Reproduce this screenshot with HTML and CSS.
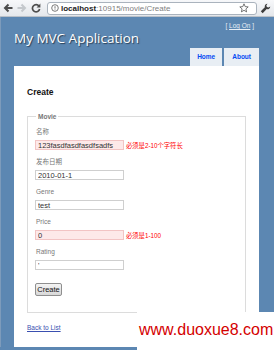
FILE: index.html
```html
<!DOCTYPE html>
<html lang="zh-CN">
  <head>
    <meta charset="UTF-8" />
    <title>Create</title>
    <link rel="stylesheet" href="styles.css">
  </head>
  <body>
    <!-- ブラウザのツールバー -->
    <div class="toolbar">
      <svg class="nav-icon" width="10" height="10" viewBox="0 0 10 10">
        <path d="M9.5 5H2.5M5.5 1.5L2 5l3.5 3.5" stroke="#4d4d4d" stroke-width="2" fill="none" />
      </svg>
      <svg class="nav-icon" width="10" height="10" viewBox="0 0 10 10">
        <path d="M0.5 5H7.5M4.5 1.5L8 5 4.5 8.5" stroke="#c4c8cc" stroke-width="2" fill="none" />
      </svg>
      <svg class="nav-icon" width="10" height="10" viewBox="0 0 10 10">
        <path d="M8 3.2A3.6 3.6 0 1 0 8.6 6" stroke="#4d4d4d" stroke-width="1.7" fill="none" />
        <path d="M9.4 0.6V4.4H5.6z" fill="#4d4d4d" />
      </svg>
      <div class="omnibox">
        <svg class="page-icon" width="8" height="8" viewBox="0 0 8 8">
          <circle cx="4" cy="4" r="3.3" stroke="#6b6b6b" stroke-width="0.9" fill="none" />
          <path d="M4 2.2V4.6M4 5.4V6" stroke="#6b6b6b" stroke-width="0.9" />
        </svg>
        <span class="url"><b>localhost</b>:10915/movie/Create</span>
        <svg class="star" width="10" height="10" viewBox="0 0 10 10">
          <path d="M5 0.8l1.2 2.8 3 .3-2.3 2 .7 3L5 7.3 2.4 8.9l.7-3-2.3-2 3-.3z" stroke="#555" stroke-width="0.8" fill="none" />
        </svg>
      </div>
      <svg class="wrench" width="11" height="11" viewBox="0 0 11 11">
        <path d="M7.6 0.6a2.8 2.8 0 0 0-2.7 3.6L0.8 8.3l1.9 1.9 4.1-4.1A2.8 2.8 0 0 0 10.4 3.4L8.6 4.6 7 4 6.4 2.4 7.6 0.6z" fill="#3d3d3d" />
      </svg>
    </div>

    <div class="page">
      <div class="header">
        <div class="title">
          <h1>My MVC Application</h1>
        </div>
        <div class="header-right">
          <div class="logindisplay">[ <a href="#">Log On</a> ]</div>
          <ul class="menu">
            <li><a href="#">Home</a></li>
            <li><a href="#">About</a></li>
          </ul>
        </div>
      </div>

      <div class="main">
        <h2>Create</h2>

        <form>
          <fieldset>
            <legend>Movie</legend>

            <div class="editor-label">名称</div>
            <div class="editor-field">
              <input type="text" class="input-validation-error" value="123fasdfasdfasdfsadfs" />
              <span class="field-validation-error">必须是2-10个字符长</span>
            </div>

            <div class="editor-label">发布日期</div>
            <div class="editor-field">
              <input type="text" value="2010-01-1" />
            </div>

            <div class="editor-label">Genre</div>
            <div class="editor-field">
              <input type="text" value="test" />
            </div>

            <div class="editor-label">Price</div>
            <div class="editor-field">
              <input type="text" class="input-validation-error" value="0" />
              <span class="field-validation-error">必须是1-100</span>
            </div>

            <div class="editor-label">Rating</div>
            <div class="editor-field">
              <input type="text" value="'" />
            </div>

            <p class="submit-row">
              <input type="submit" class="btn" value="Create" />
            </p>
          </fieldset>
        </form>

        <div class="back-link">
          <a href="#">Back to List</a>
        </div>
      </div>
    </div>

    <!-- 透かし -->
    <div class="watermark">www.duoxue8.com</div>
  </body>
</html>
```

FILE: styles.css
```css
body {
  margin: 0;
  width: 274px;
  height: 350px;
  overflow: hidden;
  position: relative;
  font-family: "Liberation Sans", Arial, "Noto Sans CJK SC", sans-serif;
  background-color: #5c87b2;
}

.toolbar {
  display: flex;
  align-items: center;
  height: 17px;
  padding: 0 3px;
  box-sizing: border-box;
  background: linear-gradient(#f7f8fa, #e4e7eb);
  border-bottom: 1px solid #b9c0c8;
}

.nav-icon {
  margin-right: 4px;
  flex-shrink: 0;
}

.omnibox {
  display: flex;
  align-items: center;
  margin-left: 2px;
  width: 213px;
  height: 13px;
  box-sizing: border-box;
  background: white;
  border: 1px solid #aab3bd;
  border-radius: 3px;
  padding: 0 3px;
}

.page-icon {
  margin-right: 2px;
  flex-shrink: 0;
}

.url {
  flex: 1;
  font-size: 8px;
  color: #808080;
  white-space: nowrap;
}

.url b {
  color: #222;
}

.star {
  flex-shrink: 0;
  margin-right: 4px;
}

.wrench {
  margin-left: 3px;
}

.page {
  padding: 0 15px 0 13px;
  border-left: 1px solid #7d9bbb;
}

.header {
  display: flex;
  justify-content: space-between;
  height: 49px;
}

.title h1 {
  margin: 0;
  padding: 12px 0 0 0;
  font-family: "Open Sans", "Liberation Sans", sans-serif;
  font-size: 13.5px;
  line-height: 18px;
  font-weight: normal;
  color: white;
  text-shadow: 1px 1px 1px #2a3f55;
}

.header-right {
  display: flex;
  flex-direction: column;
  justify-content: space-between;
  align-items: flex-end;
}

.logindisplay {
  padding: 5px 5px 0 0;
  font-size: 6.5px;
  line-height: 8px;
  color: #e6eef6;
}

.logindisplay a {
  color: #e6eef6;
}

.menu {
  display: flex;
  gap: 2px;
  margin: 0;
  padding: 0;
  list-style: none;
}

.menu a {
  display: block;
  height: 18px;
  line-height: 18px;
  padding: 0 7px;
  background-color: #e8eef4;
  color: #034af3;
  font-size: 6.5px;
  font-weight: bold;
  text-decoration: none;
}

.menu li:last-child a {
  padding: 0 8px;
}

.main {
  background: white;
  padding: 21px 13px 15px;
}

.main h2 {
  margin: 0;
  font-size: 8.5px;
  line-height: 10px;
  color: #111;
}

fieldset {
  margin: 15px 0 0 0;
  padding: 6px 7px 16px;
  border: 1px solid #dcdcdc;
}

legend {
  padding: 0 2px;
  margin-left: 1px;
  font-size: 6.5px;
  line-height: 9px;
  font-weight: bold;
  color: #777;
}

.editor-label {
  height: 9px;
  line-height: 9px;
  padding-left: 1px;
  font-size: 6.5px;
  color: #777;
}

.editor-field {
  display: flex;
  align-items: center;
  padding: 4px 0 7px;
}

.editor-field input {
  width: 89px;
  height: 10px;
  box-sizing: border-box;
  margin: 0;
  padding: 0 2px;
  border: 1px solid #cfcfcf;
  font-family: "Liberation Sans", Arial, sans-serif;
  font-size: 7.5px;
  color: #333;
  background: white;
}

.editor-field input.input-validation-error {
  border-color: #f2c4c4;
  background-color: #fde9e9;
}

.field-validation-error {
  margin-left: 2px;
  font-size: 6.3px;
  color: #f00;
  white-space: nowrap;
}

.submit-row {
  margin: 1px 0 0 0;
}

.btn {
  height: 13px;
  width: 27px;
  margin: 0;
  padding: 0;
  font-family: "Liberation Sans", Arial, sans-serif;
  font-size: 7.5px;
  color: #111;
  background: linear-gradient(#f4f4f4, #d8d8d8);
  border: 1px solid #8f8f8f;
  border-radius: 2px;
}

.back-link {
  margin-top: 10px;
  line-height: 9px;
  font-size: 6.5px;
}

.back-link a {
  color: #3a4fb0;
}

.watermark {
  position: absolute;
  left: 137px;
  top: 312px;
  width: 137px;
  height: 38px;
  padding: 9px 0 0 2px;
  box-sizing: border-box;
  background: white;
  font-family: "Liberation Sans", Arial, sans-serif;
  font-size: 16px;
  color: #d40000;
  white-space: nowrap;
}
```
